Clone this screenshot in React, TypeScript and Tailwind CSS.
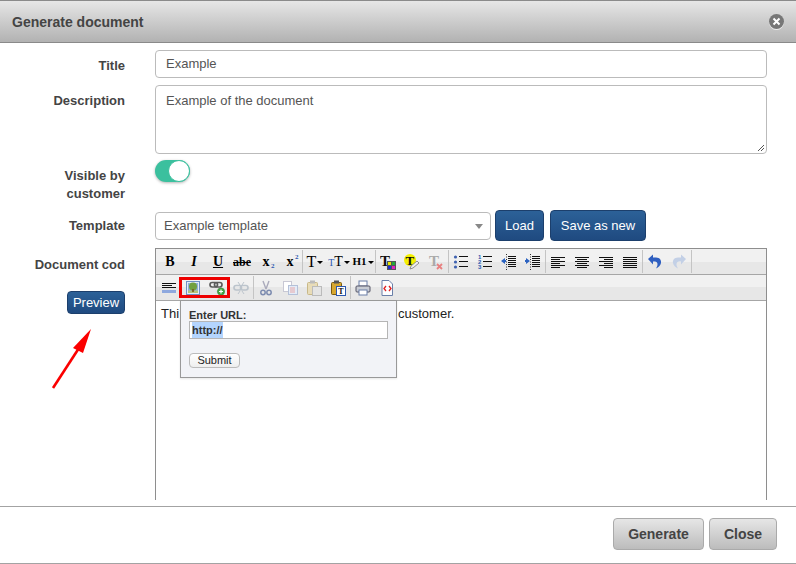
import React from "react";

const Svg = ({ children }: { children: React.ReactNode }) => (
  <svg width="16" height="16" viewBox="0 0 16 16" shapeRendering="geometricPrecision">{children}</svg>
);

const Lines = ({ rows }: { rows: [number, number, number][] }) => (
  <Svg>
    {rows.map(([x, y, w], i) => (
      <rect key={i} x={x} y={y} width={w} height={1} fill="#111" />
    ))}
  </Svg>
);

const Btn = ({ children }: { children: React.ReactNode }) => (
  <span className="flex h-[23px] w-6 shrink-0 items-center justify-center">{children}</span>
);

const Sep = () => <span className="h-[23px] w-px shrink-0 bg-[#c4c4c4]" />;

const Glyph = ({ children, className }: { children: React.ReactNode; className?: string }) => (
  <span className={`relative font-['Liberation_Serif',serif] leading-none text-black ${className ?? ""}`}>{children}</span>
);

const Sub = ({ children, top }: { children: React.ReactNode; top?: boolean }) => (
  <span className={`absolute -right-[5px] text-[7px] font-bold leading-none text-[#2b57b0] ${top ? "-top-[1px]" : "-bottom-[1px]"}`}>{children}</span>
);

const Caret = () => <span className="ml-px inline-block h-0 w-0 border-x-[3px] border-t-[3px] border-x-transparent border-t-black align-middle" />;

const ListIcon = ({ numbered }: { numbered?: boolean }) => (
  <Svg>
    {[2, 7, 12].map((y, i) =>
      numbered ? (
        <text key={y} x="1" y={y + 3} fontSize="6" fontWeight="700" fill="#2b57b0" fontFamily="Liberation Sans">{i + 1}</text>
      ) : (
        <circle key={y} cx="2.5" cy={y + 1} r="1.6" fill="#3f62b0" />
      )
    )}
    {[3, 8, 13].map((y) => <rect key={y} x="6" y={y - 1} width="9" height="1" fill="#111" />)}
  </Svg>
);

const Indent = ({ out }: { out?: boolean }) => (
  <Svg>
    {[2, 4, 6, 8, 10, 12].map((y) => <rect key={y} x="7" y={y} width="8" height="1" fill="#111" />)}
    <path d="M5.5 0v16" stroke="#333" strokeDasharray="1 1.5" />
    {out ? <path d="M0 7l4-3v2h1v2H4v2z" fill="#2b62c0" /> : <path d="M5 7L1 4v2H0v2h1v2z" fill="#2b62c0" />}
  </Svg>
);

const ChainIcon = ({ plus, dim }: { plus?: boolean; dim?: boolean }) => (
  <Svg>
    <g fill="none" stroke={dim ? "#bcc4cc" : "#5c5c5c"} strokeWidth="1.7">
      <rect x={1} y={plus ? 2.5 : 5.5} width="7.5" height="4.5" rx="2.2" />
      <rect x={plus ? 5.5 : 7.5} y={plus ? 2.5 : 5.5} width="7.5" height="4.5" rx="2.2" />
    </g>
    {plus && (
      <>
        <circle cx="12" cy="11.5" r="3.6" fill="#45a845" stroke="#2f7d2f" strokeWidth="0.6" />
        <path d="M10 11.5h4M12 9.5v4" stroke="#fff" strokeWidth="1.2" />
      </>
    )}
    {dim && <path d="M5 2l2 3M11 2L9 5M5 14l2-3M11 14l-2-3" stroke="#bcc4cc" strokeWidth="1" />}
  </Svg>
);

const Doc = ({ x = 3, y = 1, w = 10, h = 14, fill = "#fff", stroke = "#8aa0c0" }) => (
  <rect x={x + 0.5} y={y + 0.5} width={w} height={h} fill={fill} stroke={stroke} />
);

const Clipboard = ({ bold }: { bold?: boolean }) => (
  <Svg>
    <rect x="1.5" y="2.5" width="10" height="12" rx="1" fill={bold ? "#d8a830" : "#e8dcb8"} stroke={bold ? "#7a5a10" : "#c8b888"} />
    <rect x="4" y="0.5" width="5" height="3" fill={bold ? "#555" : "#bbb"} />
    <rect x="6.5" y="6.5" width="9" height="9" fill={bold ? "#fff" : "#e4e4e4"} stroke={bold ? "#2b57b0" : "#bbb"} />
    {bold && <text x="8.2" y="14" fontSize="8" fontWeight="700" fontFamily="Liberation Serif" fill="#111">T</text>}
  </Svg>
);

const undoPath = "M1 5L6 .5v3h3c4 0 5.500 3 5 5.500-.5 2.500-2.500 4.500-5 5.500 1.500-2.500 2-4.500 1-6-1-1.200-2.500-1.200-4-1v3z";

const toolbarBg = "bg-[linear-gradient(#f1f1f1_0%,#f1f1f1_50%,#e7e7e7_50%,#e7e7e7_100%)]";

const Row1 = () => (
  <div className={`flex h-[25px] items-center pl-[2px] ${toolbarBg}`}>
    <Btn><Glyph className="text-[14px] font-bold">B</Glyph></Btn>
    <Btn><Glyph className="text-[14px] font-bold italic">I</Glyph></Btn>
    <Btn><Glyph className="text-[14px] font-bold underline">U</Glyph></Btn>
    <Btn><Glyph className="text-[12px] font-bold line-through">abe</Glyph></Btn>
    <Btn><Glyph className="text-[14px] font-bold">x<Sub>2</Sub></Glyph></Btn>
    <Btn><Glyph className="text-[14px] font-bold">x<Sub top>2</Sub></Glyph></Btn>
    <Sep />
    <Btn><Glyph className="text-[16px]">T<Caret /></Glyph></Btn>
    <Btn><Glyph className="text-[14px]"><span className="text-[10px] text-[#2b57b0]">T</span>T<Caret /></Glyph></Btn>
    <Btn><Glyph className="text-[11px] font-bold">H1<Caret /></Glyph></Btn>
    <Sep />
    <Btn>
      <Svg>
        <text x="0" y="12" fontSize="15" fontWeight="700" fontFamily="Liberation Serif" fill="#111">T</text>
        <rect x="7" y="7" width="9" height="9" fill="#555" />
        <rect x="8" y="8" width="3" height="3" fill="#e8e800" />
        <rect x="12" y="8" width="3" height="3" fill="#22a83a" />
        <rect x="8" y="12" width="3" height="3" fill="#2030d0" />
        <rect x="12" y="12" width="3" height="3" fill="#e020c0" />
      </Svg>
    </Btn>
    <Btn>
      <Svg>
        <circle cx="6" cy="6" r="6" fill="#f4f000" />
        <text x="1.5" y="11" fontSize="13" fontWeight="700" fontFamily="Liberation Serif" fill="#111">T</text>
        <path d="M6 15l1-3 6-5 2 2-6 5z" fill="#eee" stroke="#777" strokeWidth="0.8" />
      </Svg>
    </Btn>
    <Btn>
      <Svg>
        <text x="1" y="12" fontSize="15" fontWeight="700" fontFamily="Liberation Serif" fill="#aaa">T</text>
        <path d="M9 10l5 5M14 10l-5 5" stroke="#e88080" strokeWidth="1.8" />
      </Svg>
    </Btn>
    <Sep />
    <Btn><ListIcon /></Btn>
    <Btn><ListIcon numbered /></Btn>
    <Btn><Indent out /></Btn>
    <Btn><Indent /></Btn>
    <Sep />
    <Btn><Lines rows={[[1, 3, 14], [1, 5, 9], [1, 7, 14], [1, 9, 9], [1, 11, 14], [1, 13, 9]]} /></Btn>
    <Btn><Lines rows={[[1, 3, 14], [3, 5, 10], [1, 7, 14], [3, 9, 10], [1, 11, 14], [3, 13, 10]]} /></Btn>
    <Btn><Lines rows={[[1, 3, 14], [6, 5, 9], [1, 7, 14], [6, 9, 9], [1, 11, 14], [6, 13, 9]]} /></Btn>
    <Btn><Lines rows={[[1, 3, 14], [1, 5, 14], [1, 7, 14], [1, 9, 14], [1, 11, 14], [1, 13, 14]]} /></Btn>
    <Sep />
    <Btn>
      <Svg><path d={undoPath} fill="#2f5fc0" /></Svg>
    </Btn>
    <Btn>
      <Svg><g transform="matrix(-1 0 0 1 16 0)"><path d={undoPath} fill="#c3d0e6" /></g></Svg>
    </Btn>
    <Sep />
  </div>
);

const Row2 = () => (
  <div className={`flex h-[26px] items-center border-t border-[#a6a6a6] pl-[1px] ${toolbarBg}`}>
    <Btn>
      <Svg>
        <rect x="1" y="3" width="14" height="1" fill="#111" />
        <rect x="1" y="5" width="10" height="1" fill="#111" />
        <rect x="1" y="7" width="14" height="1" fill="#111" />
        <rect x="1" y="10" width="14" height="3" fill="#8ea8de" />
      </Svg>
    </Btn>
    <Btn>
      <Svg>
        <rect x="1.500" y="1.500" width="13" height="13" fill="#e4ecf8" stroke="#6f90c4" />
        <rect x="3" y="3" width="10" height="10" fill="#8fb0d8" />
        <rect x="3" y="10.500" width="10" height="2.500" fill="#b4c47a" />
        <circle cx="8" cy="6.500" r="4" fill="#72a040" />
        <rect x="7.200" y="9" width="1.600" height="3" fill="#7a5a20" />
      </Svg>
    </Btn>
    <Btn><ChainIcon plus /></Btn>
    <Btn><ChainIcon dim /></Btn>
    <Sep />
    <Btn>
      <Svg>
        <path d="M5 1l3 8M11 1L8 9" stroke="#aab" strokeWidth="1.4" fill="none" />
        <circle cx="5" cy="12.5" r="2.2" fill="none" stroke="#7d8cb0" strokeWidth="1.5" />
        <circle cx="11" cy="12.5" r="2.2" fill="none" stroke="#7d8cb0" strokeWidth="1.5" />
      </Svg>
    </Btn>
    <Btn>
      <Svg>
        <Doc x={1} y={1} w={8} h={10} stroke="#c8c8d4" />
        <Doc x={6} y={5} w={9} h={9} fill="#e4ecf8" stroke="#b4c0d8" />
        <path d="M8 8h5M8 10h5M8 12h5" stroke="#e8a8a8" />
      </Svg>
    </Btn>
    <Btn><Clipboard /></Btn>
    <Btn><Clipboard bold /></Btn>
    <Sep />
    <Btn>
      <Svg>
        <rect x="4" y="1" width="8" height="5" fill="#fff" stroke="#6a7fa8" />
        <rect x="1" y="6" width="14" height="6" rx="1" fill="#c8ccd4" stroke="#556" />
        <rect x="4" y="10" width="8" height="5" fill="#fff" stroke="#6a7fa8" />
      </Svg>
    </Btn>
    <Btn>
      <Svg>
        <path d="M3 .5h7l3.5 3.5v11.5H3z" fill="#fdfdff" stroke="#6a7fa8" />
        <path d="M7 6L5 8.5 7 11M10 6l2 2.5L10 11" fill="none" stroke="#e02020" strokeWidth="1.3" />
      </Svg>
    </Btn>
  </div>
);

const blue = "rounded-[4px] border border-[#1c3f6c] bg-[linear-gradient(#2c6198,#1f4a80)] text-white";
const grey = "rounded-[4px] border border-[#aaaaaa] bg-[linear-gradient(#e6e6e6,#bcbcbc)] text-[14px] font-bold text-[#444]";
const label = "text-right text-[13px] font-bold leading-[18px] text-[#444]";
const field = "rounded-[4px] border border-[#bbbbbb] bg-white text-[13px] text-[#555]";

export default function App() {
  return (
    <div className="relative flex h-[564px] w-[796px] flex-col overflow-hidden bg-white font-['Liberation_Sans',Arial,sans-serif]">
      <header className="flex h-[43px] shrink-0 items-center justify-between border-y border-[#8a8a8a] bg-[linear-gradient(#e6e6e6,#b2b2b2)] pl-3 pr-[12px]">
        <h1 className="pt-[1px] text-[14px] font-bold text-[#444]">Generate document</h1>
        <span className="flex h-[15px] w-[15px] items-center justify-center rounded-full bg-[#777] shadow-[0_1px_0_#eee]">
          <svg width="9" height="9" viewBox="0 0 9 9"><path d="M1.5 1.5l6 6M7.5 1.5l-6 6" stroke="#fff" strokeWidth="2" /></svg>
        </span>
      </header>

      <main className="flex h-[457px] shrink-0 flex-col overflow-hidden pt-[7px]">
        <div className="flex h-[28px] shrink-0 gap-[30px]">
          <div className={`${label} w-[125px] pt-[7px]`}>Title</div>
          <div className={`${field} flex h-[28px] w-[612px] items-center pl-[10px]`}>Example</div>
        </div>
        <div className="mt-[7px] flex h-[69px] shrink-0 gap-[30px]">
          <div className={`${label} w-[125px] pt-[7px]`}>Description</div>
          <div className={`${field} relative h-[69px] w-[612px] pl-[10px] pt-[5px]`}>
            Example of the document
            <svg className="absolute bottom-px right-px" width="8" height="8" viewBox="0 0 8 8">
              <path d="M1 7l6-6M4 7l3-3" stroke="#555" strokeWidth="1" />
            </svg>
          </div>
        </div>
        <div className="mt-[6px] flex h-[50px] shrink-0 gap-[30px]">
          <div className={`${label} w-[125px] pt-[7px]`}>Visible by<br />customer</div>
          <span className="relative h-[22px] w-[35px] rounded-full bg-[#3bc09e] shadow-[0_1px_3px_rgba(0,0,0,0.3)]">
            <span className="absolute right-0 top-0 h-[22px] w-[22px] rounded-full border border-[#3bc09e] bg-white" />
          </span>
        </div>
        <div className="flex h-[31px] shrink-0 gap-[30px]">
          <div className={`${label} w-[125px] pt-[7px]`}>Template</div>
          <div className="flex items-start">
            <div className={`${field} mt-[2px] flex h-[28px] w-[336px] items-center justify-between pl-[8px] pr-[7px] text-[#444]`}>
              Example template
              <span className="h-0 w-0 border-x-[4px] border-t-[5px] border-x-transparent border-t-[#888]" />
            </div>
            <button className={`${blue} ml-[4px] h-[31px] w-[49px] text-[13px] leading-none`}>Load</button>
            <button className={`${blue} ml-[6px] h-[31px] w-[96px] text-[13px] leading-none`}>Save as new</button>
          </div>
        </div>
        <div className="mt-[7px] flex min-h-0 flex-1 gap-[30px]">
          <div className="flex w-[125px] flex-col items-end">
            <div className={`${label} pt-[8px]`}>Document cod</div>
            <button className={`${blue} mt-[17px] h-[23px] w-[58px] text-[13px] leading-none`}>Preview</button>
          </div>
          <div className="h-[300px] w-[612px] border border-[#8e8e8e] bg-white">
            <Row1 />
            <Row2 />
            <div className="border-t border-[#a6a6a6] px-[5px] pt-[4px] text-[13px] leading-[18px] text-[#222]">
              <span className="inline-block w-[237px]">Thi</span>customer.
            </div>
          </div>
        </div>
      </main>

      <footer className="mt-[6px] flex min-h-0 flex-1 items-start justify-end gap-[5px] border-y border-[#a3a3a3] pr-[19px] pt-[11px]">
        <button className={`${grey} h-[32px] w-[91px]`}>Generate</button>
        <button className={`${grey} h-[32px] w-[68px]`}>Close</button>
      </footer>

      {/* popover over the editor */}
      <div className="absolute left-[180px] top-[300px] h-[78px] w-[217px] border border-[#999] bg-[#f2f3f7] pl-[8px] pt-[8px] shadow-[0_1px_2px_rgba(0,0,0,0.1)]">
        <div className="text-[11px] font-bold leading-[13px] text-[#333]">Enter URL:</div>
        <div className="mt-[-1px] flex h-[18px] w-[199px] items-center border border-[#b5b5b5] bg-white pl-[2px] text-[11px] font-bold text-[#333]">
          <span className="bg-[#b4d5fe]">http://</span>
        </div>
        <button className="mt-[14px] flex h-[15px] w-[51px] items-center justify-center rounded-[4px] border border-[#bbb] bg-[linear-gradient(#fff,#eee)] text-[11px] text-[#222]">Submit</button>
      </div>

      {/* annotations */}
      <div className="absolute left-[179px] top-[277px] h-[21px] w-[51px] border-[3px] border-[#ee0000]" />
      <svg className="absolute left-[48px] top-[324px]" width="48" height="70" viewBox="0 0 48 70">
        <path d="M5 64L31 24" stroke="#fb0000" strokeWidth="2.6" />
        <path d="M43 5L35 29 25 24z" fill="#fb0000" />
      </svg>
    </div>
  );
}
